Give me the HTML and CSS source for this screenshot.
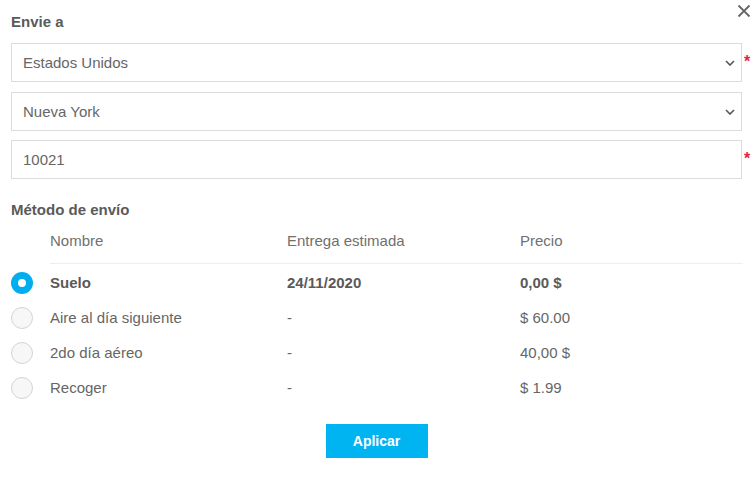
FILE: index.html
```html
<!DOCTYPE html>
<html lang="es">
<head>
<meta charset="utf-8">
<title>Envío</title>
<link rel="stylesheet" href="styles.css">
</head>
<body>
<div class="dialog">
  <button class="close" aria-label="Cerrar">
    <svg width="14" height="14" viewBox="0 0 14 14"><path d="M1.5 1.5L12.5 12.5M12.5 1.5L1.5 12.5" stroke="#666" stroke-width="1.8" fill="none"/></svg>
  </button>
  <h2 class="title">Envie a</h2>
  <div class="field-row">
    <div class="field select"><span>Estados Unidos</span>
      <svg class="chev" width="10" height="6" viewBox="0 0 10 6"><path d="M1 1L5 5L9 1" stroke="#555" stroke-width="1.6" fill="none"/></svg>
    </div>
    <span class="req">*</span>
  </div>
  <div class="field-row tight">
    <div class="field select"><span>Nueva York</span>
      <svg class="chev" width="10" height="6" viewBox="0 0 10 6"><path d="M1 1L5 5L9 1" stroke="#555" stroke-width="1.6" fill="none"/></svg>
    </div>
    <span class="req"></span>
  </div>
  <div class="field-row">
    <div class="field"><span>10021</span></div>
    <span class="req">*</span>
  </div>

  <h2 class="title method">Método de envío</h2>
  <div class="table">
    <div class="row head">
      <span></span><span>Nombre</span><span>Entrega estimada</span><span>Precio</span>
    </div>
    <div class="row selected">
      <span class="radio on"></span><span>Suelo</span><span>24/11/2020</span><span>0,00 $</span>
    </div>
    <div class="row">
      <span class="radio"></span><span>Aire al día siguiente</span><span>-</span><span>$ 60.00</span>
    </div>
    <div class="row">
      <span class="radio"></span><span>2do día aéreo</span><span>-</span><span>40,00 $</span>
    </div>
    <div class="row">
      <span class="radio"></span><span>Recoger</span><span>-</span><span>$ 1.99</span>
    </div>
  </div>
  <div class="actions">
    <button class="apply">Aplicar</button>
  </div>
</div>
</body>
</html>
```
FILE: styles.css
```css
* { box-sizing: border-box; }
body {
  margin: 0;
  background: #fff;
  font-family: "Liberation Sans", Arial, sans-serif;
  color: #666;
  font-size: 15px;
}
.dialog {
  position: relative;
  padding: 12px 0 0 11px;
}
.close {
  position: absolute;
  top: 4px;
  right: 2px;
  border: 0;
  background: none;
  padding: 0;
  width: 14px;
  height: 14px;
  display: flex;
}
.title {
  margin: 0 0 11px;
  font-size: 15px;
  line-height: 20px;
  font-weight: bold;
  color: #5a5a5a;
}
.title.method {
  margin: 21px 0 0;
}
.field-row {
  display: flex;
  margin-bottom: 10px;
}
.field-row.tight { margin-bottom: 9px; }
.field-row:last-of-type { margin-bottom: 0; }
.field {
  flex: 1;
  height: 39px;
  border: 1px solid #dcdcdc;
  display: flex;
  align-items: center;
  justify-content: space-between;
  padding: 0 6px 0 11px;
  color: #666;
}
.chev { display: block; }
.req {
  width: 11px;
  color: #e8213f;
  font-size: 16px;
  line-height: 14px;
  padding: 12px 0 0 2px;
  font-weight: bold;
}
.table {
  display: flex;
  flex-direction: column;
}
.row {
  display: grid;
  grid-template-columns: 39px 237px 233px 1fr;
  align-items: center;
  height: 35px;
  color: #666;
  margin-right: 10px;
}
.row.head {
  height: auto;
  padding: 11px 0 13px;
  line-height: 20px;
  position: relative;
  color: #707070;
  margin-bottom: 1px;
}
.row.head::after {
  content: "";
  position: absolute;
  left: 39px;
  right: 0;
  bottom: 0;
  border-bottom: 1px solid #eee;
}
.row.selected { font-weight: bold; color: #5a5a5a; }
.radio {
  width: 22px;
  height: 22px;
  border-radius: 50%;
  border: 1px solid #d4d4d4;
  background: #f7f7f7;
}
.radio.on {
  border: 7px solid #00aeef;
  background: #fff;
}
.actions {
  display: flex;
  justify-content: center;
  margin-top: 19px;
  padding-right: 11px;
}
.apply {
  width: 102px;
  height: 34px;
  border: 0;
  background: #00b4f1;
  color: #fff;
  font-family: "Liberation Sans", Arial, sans-serif;
  font-size: 14px;
  font-weight: bold;
}
```
